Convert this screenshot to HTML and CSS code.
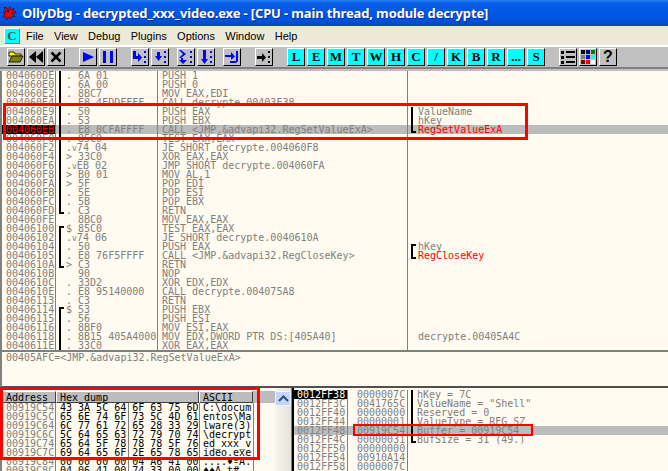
FILE: index.html
```html
<!DOCTYPE html>
<html lang="en">
<head>
<meta charset="utf-8">
<title>OllyDbg</title>
<link rel="stylesheet" href="styles.css">
</head>
<body>
<div class="window">
  <header class="title">
    <svg class="app-icon" width="16" height="16" viewBox="0 0 16 16"><path d="M2 2l3 1 1 2 2-3 1 3 3-2-1 3 3 1-3 2 2 3-3-1-1 3-2-2-2 3-1-3-3 0 2-3-2-2 3 0z" fill="#f00010" stroke="#400" stroke-width=".6"/><circle cx="6" cy="6" r="1" fill="#000"/><circle cx="10" cy="8" r="1" fill="#000"/></svg>
    <span>OllyDbg - decrypted_xxx_video.exe - [CPU - main thread, module decrypte]</span>
  </header>
  <nav class="menu">
    <span class="cpu-badge">C</span>
    <span class="menu-items"><span>File</span><span>View</span><span>Debug</span><span>Plugins</span><span>Options</span><span>Window</span><span>Help</span></span>
  </nav>
  <div class="toolbar">
    <span class="btn"><svg width="16" height="16" viewBox="0 0 16 16"><path d="M1 3h5l1 2h6v2H1z" fill="#ffff00" stroke="#000" stroke-width=".8"/><path d="M1 13l3-6h11l-3 6z" fill="#808000" stroke="#000" stroke-width=".8"/></svg></span>
    <span class="btn"><svg width="16" height="16" viewBox="0 0 16 16"><path d="M8 2v12L1 8zM15 2v12L8 8z"/></svg></span>
    <span class="btn"><svg width="16" height="16" viewBox="0 0 16 16"><path d="M3.5 3.5l9 9M12.500 3.500l-9 9" stroke="#000" stroke-width="2.500"/></svg></span>
    <span class="btn wide"><svg width="16" height="16" viewBox="0 0 16 16"><path d="M3 3l11 5-11 5z" fill="#0000ff"/></svg></span>
    <span class="btn"><svg width="16" height="16" viewBox="0 0 16 16"><path d="M3 2h3v12H3zM10 2h3v12h-3z" fill="#0000ff"/></svg></span>
    <span class="btn wide"><svg width="16" height="16" viewBox="0 0 16 16"><path d="M1 2h3v5h2V4l4 4.500L6 13v-3H1zM12 2h2v2h-2zM12 7h2v2h-2zM12 12h2v2h-2z" fill="#0000ff"/></svg></span>
    <span class="btn"><svg width="16" height="16" viewBox="0 0 16 16"><path d="M5 3h3v4h2l-3.500 5L3 7h2zM12 2h2v2h-2zM12 7h2v2h-2zM12 12h2v2h-2z" fill="#0000ff"/></svg></span>
    <span class="btn narrow"><svg width="16" height="16" viewBox="0 0 16 16"><path d="M1 1h2l5 4-5 4H1l4-4zM3 9h2v2h4l-4 4-4-4h2zM12 2h2v2h-2zM12 7h2v2h-2zM12 12h2v2h-2z" fill="#0000ff"/></svg></span>
    <span class="btn"><svg width="16" height="16" viewBox="0 0 16 16"><path d="M5 1h3v9h2l-3.500 5L3 10h2zM12 2h2v2h-2zM12 7h2v2h-2zM12 12h2v2h-2z" fill="#0000ff"/></svg></span>
    <span class="btn narrow"><svg width="16" height="16" viewBox="0 0 16 16"><path d="M1 6h6V3l4 4.500L7 11V8H1zM12 2h2v10l-2 2H6v-2h6z" fill="#0000ff"/></svg></span>
    <span class="btn wide"><svg width="16" height="16" viewBox="0 0 16 16"><path d="M1 7h5V4l4 4.500L6 13v-3H1zM12 2h2v2h-2zM12 7h2v2h-2zM12 12h2v2h-2z"/></svg></span>
    <span class="btn wide letter">L</span>
    <span class="btn letter">E</span>
    <span class="btn letter">M</span>
    <span class="btn letter">T</span>
    <span class="btn letter">W</span>
    <span class="btn letter">H</span>
    <span class="btn letter">C</span>
    <span class="btn letter">/</span>
    <span class="btn letter">K</span>
    <span class="btn letter">B</span>
    <span class="btn letter">R</span>
    <span class="btn letter">...</span>
    <span class="btn letter">S</span>
    <span class="btn wide"><svg width="16" height="16" viewBox="0 0 16 16"><path d="M1 2h3v3H1zM1 7h3v3H1zM1 12h3v3H1zM6 2h9v2H6zM6 7h9v2H6zM6 12h9v2H6z"/></svg></span>
    <span class="btn"><svg width="16" height="16" viewBox="0 0 16 16"><path fill="#000" d="M1 1h4v4H1z"/><path fill="#000080" d="M6 1h4v4H6z"/><path fill="#008000" d="M11 1h4v4h-4z"/><path fill="#808080" d="M1 6h4v4H1z"/><path fill="#0000ff" d="M6 6h4v4H6z"/><path fill="#00ffff" d="M11 6h4v4h-4z"/><path fill="#800000" d="M1 11h4v4H1z"/><path fill="#ff0000" d="M6 11h4v4H6z"/><path fill="#fff" d="M11 11h4v4h-4z"/></svg></span>
    <span class="btn help">?</span>
  </div>
  <div class="toolbar-rule"></div>

  <main class="cpu">
    <section class="disasm">
      <div class="row"><span class="addr">004060DE</span><span class="hex b-mid">. 6A 01</span><span class="code">PUSH 1</span><span class="note"></span></div>
      <div class="row"><span class="addr">004060E0</span><span class="hex b-mid">. 6A 00</span><span class="code">PUSH 0</span><span class="note"></span></div>
      <div class="row"><span class="addr">004060E2</span><span class="hex b-mid">. 8BC7</span><span class="code">MOV EAX,EDI</span><span class="note"></span></div>
      <div class="row"><span class="addr">004060E4</span><span class="hex b-mid">. E8 4FDDFFFF</span><span class="code">CALL decrypte.00403E38</span><span class="note"></span></div>
      <div class="row"><span class="addr">004060E9</span><span class="hex b-mid">. 50</span><span class="code">PUSH EAX</span><span class="note b-mid">ValueName</span></div>
      <div class="row"><span class="addr">004060EA</span><span class="hex b-mid">. 53</span><span class="code">PUSH EBX</span><span class="note b-mid">hKey</span></div>
      <div class="row current"><span class="addr">004060EB</span><span class="hex b-mid">. E8 0CFAFFFF</span><span class="code">CALL &lt;JMP.&amp;advapi32.RegSetValueExA&gt;</span><span class="note b-end api">RegSetValueExA</span></div>
      <div class="row"><span class="addr">004060F0</span><span class="hex b-mid">. 85C0</span><span class="code">TEST EAX,EAX</span><span class="note"></span></div>
      <div class="row"><span class="addr">004060F2</span><span class="hex b-mid">.<i>v</i>74 04</span><span class="code">JE SHORT decrypte.004060F8</span><span class="note"></span></div>
      <div class="row"><span class="addr">004060F4</span><span class="hex b-mid">&gt; 33C0</span><span class="code">XOR EAX,EAX</span><span class="note"></span></div>
      <div class="row"><span class="addr">004060F6</span><span class="hex b-mid">.<i>v</i>EB 02</span><span class="code">JMP SHORT decrypte.004060FA</span><span class="note"></span></div>
      <div class="row"><span class="addr">004060F8</span><span class="hex b-mid">&gt; B0 01</span><span class="code">MOV AL,1</span><span class="note"></span></div>
      <div class="row"><span class="addr">004060FA</span><span class="hex b-mid">&gt; 5F</span><span class="code">POP EDI</span><span class="note"></span></div>
      <div class="row"><span class="addr">004060FB</span><span class="hex b-mid">. 5E</span><span class="code">POP ESI</span><span class="note"></span></div>
      <div class="row"><span class="addr">004060FC</span><span class="hex b-mid">. 5B</span><span class="code">POP EBX</span><span class="note"></span></div>
      <div class="row"><span class="addr">004060FD</span><span class="hex b-end">. C3</span><span class="code">RETN</span><span class="note"></span></div>
      <div class="row"><span class="addr">004060FE</span><span class="hex">  8BC0</span><span class="code">MOV EAX,EAX</span><span class="note"></span></div>
      <div class="row"><span class="addr">00406100</span><span class="hex b-top">$ 85C0</span><span class="code">TEST EAX,EAX</span><span class="note"></span></div>
      <div class="row"><span class="addr">00406102</span><span class="hex b-mid">.<i>v</i>74 06</span><span class="code">JE SHORT decrypte.0040610A</span><span class="note"></span></div>
      <div class="row"><span class="addr">00406104</span><span class="hex b-mid">. 50</span><span class="code">PUSH EAX</span><span class="note b-top">hKey</span></div>
      <div class="row"><span class="addr">00406105</span><span class="hex b-mid">. E8 76F5FFFF</span><span class="code">CALL &lt;JMP.&amp;advapi32.RegCloseKey&gt;</span><span class="note b-end api">RegCloseKey</span></div>
      <div class="row"><span class="addr">0040610A</span><span class="hex b-end">&gt; C3</span><span class="code">RETN</span><span class="note"></span></div>
      <div class="row"><span class="addr">0040610B</span><span class="hex">  90</span><span class="code">NOP</span><span class="note"></span></div>
      <div class="row"><span class="addr">0040610C</span><span class="hex">. 33D2</span><span class="code">XOR EDX,EDX</span><span class="note"></span></div>
      <div class="row"><span class="addr">0040610E</span><span class="hex">. E8 95140000</span><span class="code">CALL decrypte.004075A8</span><span class="note"></span></div>
      <div class="row"><span class="addr">00406113</span><span class="hex">. C3</span><span class="code">RETN</span><span class="note"></span></div>
      <div class="row"><span class="addr">00406114</span><span class="hex b-top">$ 53</span><span class="code">PUSH EBX</span><span class="note"></span></div>
      <div class="row"><span class="addr">00406115</span><span class="hex b-mid">. 56</span><span class="code">PUSH ESI</span><span class="note"></span></div>
      <div class="row"><span class="addr">00406116</span><span class="hex b-mid">. 8BF0</span><span class="code">MOV ESI,EAX</span><span class="note"></span></div>
      <div class="row"><span class="addr">00406118</span><span class="hex b-mid">. 8B15 405A4000</span><span class="code">MOV EDX,DWORD PTR DS:[405A40]</span><span class="note">decrypte.00405A4C</span></div>
      <div class="row"><span class="addr">0040611E</span><span class="hex b-mid">. 33C0</span><span class="code">XOR EAX,EAX</span><span class="note"></span></div>
    </section>

    <section class="info">00405AFC=&lt;JMP.&amp;advapi32.RegSetValueExA&gt;</section>

    <section class="lower">
      <div class="dump">
        <div class="dump-head"><span class="head-addr">Address</span><span class="head-hex">Hex dump</span><span class="head-ascii">ASCII</span></div>
        <div class="drow"><span class="addr">00919C54</span><span class="bytes">43 3A 5C 64 6F 63 75 6D</span><span class="ascii">C:\docum</span></div>
        <div class="drow"><span class="addr">00919C5C</span><span class="bytes">65 6E 74 6F 73 5C 4D 61</span><span class="ascii">entos\Ma</span></div>
        <div class="drow"><span class="addr">00919C64</span><span class="bytes">6C 77 61 72 65 28 33 29</span><span class="ascii">lware(3)</span></div>
        <div class="drow"><span class="addr">00919C6C</span><span class="bytes">5C 64 65 63 72 79 70 74</span><span class="ascii">\decrypt</span></div>
        <div class="drow"><span class="addr">00919C74</span><span class="bytes">65 64 5F 78 78 78 5F 76</span><span class="ascii">ed_xxx_v</span></div>
        <div class="drow"><span class="addr">00919C7C</span><span class="bytes">69 64 65 6F 2E 65 78 65</span><span class="ascii">ideo.exe</span></div>
        <div class="drow"><span class="addr">00919C84</span><span class="bytes">00 00 00 00 04 A6 41 00</span><span class="ascii">....♦ªA.</span></div>
        <div class="drow"><span class="addr">00919C8C</span><span class="bytes">04 06 41 00 74 33 00 00</span><span class="ascii">♦♠A.t#..</span></div>
      </div>
      <div class="scroll"><span class="scroll-up"><svg width="11" height="7" viewBox="0 0 11 7"><path d="M1 6l4.500-4.500L10 6" fill="none" stroke="#2c4a8c" stroke-width="2"/></svg></span></div>
      <div class="stack">
        <div class="srow top"><span class="addr">0012FF38</span><span class="val">0000007C</span><span class="cmt b-mid">hKey = 7C</span></div>
        <div class="srow"><span class="addr">0012FF3C</span><span class="val">0041765C</span><span class="cmt b-mid">ValueName = "Shell"</span></div>
        <div class="srow"><span class="addr">0012FF40</span><span class="val">00000000</span><span class="cmt b-mid">Reserved = 0</span></div>
        <div class="srow"><span class="addr">0012FF44</span><span class="val">00000001</span><span class="cmt b-mid">ValueType = REG_SZ</span></div>
        <div class="srow current"><span class="addr">0012FF48</span><span class="val">00919C54</span><span class="cmt b-mid">Buffer = 00919C54</span></div>
        <div class="srow"><span class="addr">0012FF4C</span><span class="val">00000031</span><span class="cmt b-end">BufSize = 31 (49.)</span></div>
        <div class="srow"><span class="addr">0012FF50</span><span class="val">00000000</span><span class="cmt"></span></div>
        <div class="srow"><span class="addr">0012FF54</span><span class="val">00910A14</span><span class="cmt"></span></div>
        <div class="srow"><span class="addr">0012FF58</span><span class="val">0000007C</span><span class="cmt"></span></div>
      </div>
    </section>

    <div class="mark mark-call"></div>
    <div class="mark mark-dump"></div>
    <div class="mark mark-buffer"></div>
  </main>
</div>
</body>
</html>
```

FILE: styles.css
```css
html, body { margin: 0; padding: 0; background: #c0c0c0; }
.window { width: 668px; height: 471px; overflow: hidden; display: flex; flex-direction: column; }

.title {
  height: 26px; flex: none; display: flex; align-items: center; gap: 4px; padding-left: 2px;
  background: linear-gradient(#2a80f5 0, #0a5fe8 3px, #0058e6 12px, #0053dc 20px, #0046c4 26px);
  color: #fff; font: bold 13px "Noto Sans", sans-serif; letter-spacing: -.14px; white-space: nowrap;
  text-shadow: 1px 1px 0 #0a2f90;
}
.app-icon { flex: none; }

.menu {
  height: 19px; flex: none; display: flex; align-items: center; background: #ece9d8; padding-left: 4px;
  font: 11px "Liberation Sans", sans-serif; color: #000;
}
.cpu-badge {
  width: 16px; height: 16px; box-sizing: border-box; display: flex; align-items: center; justify-content: center;
  background: #00ffff; border: 1px solid; border-color: #fff #808080 #808080 #fff; color: #406060;
  font: bold 13px "Liberation Serif", serif;
}
.menu-items { display: flex; gap: 10.3px; margin-left: 6px; }

.toolbar {
  flex: none; box-sizing: border-box; border-top: 2px solid #fff; padding: 1px 0 0 7px; height: 22px;
  background: #c0c0c0; display: flex; gap: 2px; align-items: flex-start;
}
.toolbar-rule { flex: none; height: 2px; background: #808080; border-bottom: 2px solid #c0c0c0; }
.btn {
  width: 18px; height: 18px; box-sizing: border-box; flex: none; display: flex; align-items: center; justify-content: center;
  border: 1px solid; border-color: #fff #000 #000 #fff; background: #c0c0c0; color: #000; overflow: hidden;
}
.btn.wide { margin-left: 12px; }
.btn.narrow { margin-left: 6px; }
.letter { background: #00ffff; font: bold 13px "Liberation Serif", serif; }
.help { font: bold 16px "Liberation Sans", sans-serif; }

.cpu {
  flex: 1; min-height: 0; display: flex; flex-direction: column; position: relative; background: #fffbf0;
  border-left: 2px solid #808080; font: 10px/9px "DejaVu Sans Mono", monospace; color: #808080;
}
.disasm { flex: none; }
.row { display: grid; grid-template-columns: 54px 102px 250px 1fr; height: 9px; white-space: pre; }
.row > span, .drow > span, .srow > span { position: relative; height: 9px; box-sizing: border-box; }
.addr { padding-left: 4px; border-right: 1px solid #808080; }
.hex { padding-left: 10px; border-right: 1px solid #808080; }
.hex i { font-style: normal; font-size: 8px; }
.code { padding-left: 4px; border-right: 1px solid #808080; }
.note { padding-left: 10px; }
.api { color: #ff0000; }
.current { background: #bcbcbc; }
.row.current .addr { background: #000; color: #ff0000; }

.b-mid::before, .b-end::before, .b-top::before {
  content: ""; position: absolute; left: 3px; top: 0; bottom: 0; width: 2px; background: #000;
}
.b-top::before { top: 2px; }
.b-end::before { bottom: 1px; }
.b-top::after, .b-end::after { content: ""; position: absolute; left: 3px; width: 5px; height: 2px; background: #000; }
.b-top::after { top: 2px; }
.b-end::after { bottom: 1px; }

.info { flex: none; height: 36px; box-sizing: border-box; border-top: 2px solid #808080; padding: 1px 0 0 4px; white-space: pre; }

.lower { flex: 1; min-height: 0; display: flex; border-top: 2px solid #505050; overflow: hidden; background: #fffbf0; }
.dump { width: 273px; flex: none; padding-top: 3px; overflow: hidden; box-sizing: border-box; }
.dump-head { display: flex; height: 12px; background: #bcbcbc; color: #000; font: 10px/11px "DejaVu Sans Mono", monospace; }
.dump-head span { box-sizing: border-box; border: 1px solid; border-color: #fff #404040 #404040 #fff; padding-left: 3px; }
.head-addr { width: 54px; }
.head-hex { width: 143px; }
.head-ascii { width: 54px; }
.drow { display: grid; grid-template-columns: 54px 144px 54px; height: 9px; white-space: pre; color: #000; }
.drow .addr { color: #808080; }
.bytes { padding-left: 4px; border-right: 1px solid #808080; }
.bytes::before { content: ""; position: absolute; left: 72px; top: 0; bottom: 0; width: 1px; background: #808080; }
.ascii { padding-left: 3px; border-right: 1px solid #808080; }

.scroll { width: 17px; flex: none; box-sizing: border-box; background: linear-gradient(90deg, #f6f5ee, #e6e4d8); padding-top: 3px; border-right: 1px solid #808080; }
.scroll-up { display: flex; align-items: center; justify-content: center; height: 15px; background: #c6d5fa; border: 1px solid #eef2fe; box-sizing: border-box; }

.stack { flex: 1; border-left: 2px solid #000; padding-top: 2px; }
.srow { display: grid; grid-template-columns: 54px 60px 1fr; height: 9px; white-space: pre; }
.srow .addr { padding-left: 3px; }
.srow.top .addr { background: #000; color: #fff; }
.val { padding-left: 9px; border-right: 1px solid #808080; }
.cmt { padding-left: 9px; }

.mark { position: absolute; box-sizing: border-box; border: 3px solid #ff0000; }
.mark-call { left: 1px; top: 32px; width: 525px; height: 37px; }
.mark-dump { left: -2px; top: 316px; width: 260px; height: 73px; }
.mark-buffer { left: 351px; top: 353px; width: 180px; height: 12px; border-width: 2px; }
```
